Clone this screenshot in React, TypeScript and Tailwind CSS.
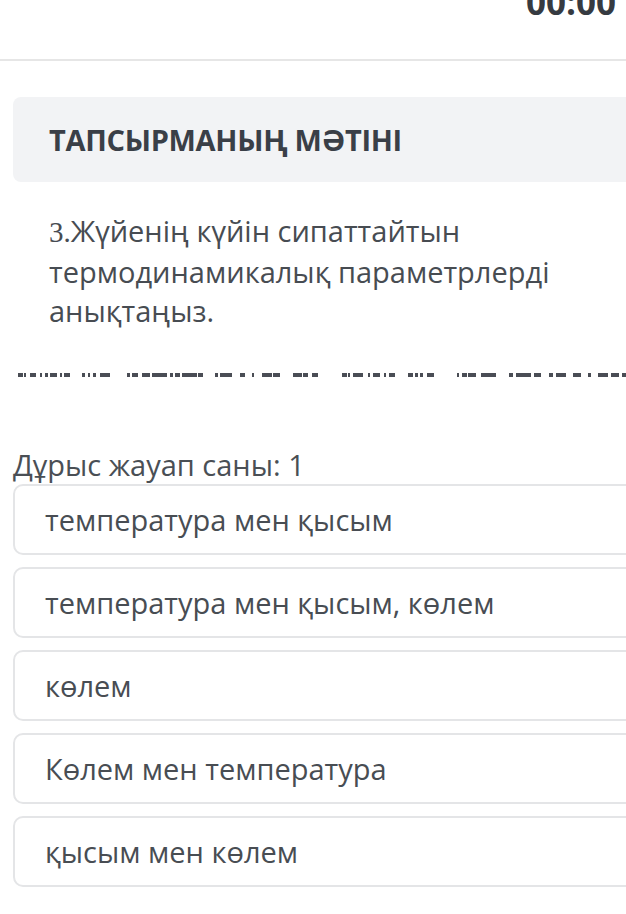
const font = { fontFamily: '"Open Sans", "Noto Sans", sans-serif' };

// cut-off line of text below the question, only the lower strokes show
const dashes: [number, number][] = [
  [18, 23], [24, 26], [30, 36], [40, 42], [45, 48], [50, 57], [60, 62], [64, 70],
  [82, 85], [88, 90], [93, 96], [100, 110],
  [127, 130], [132, 138], [142, 150], [152, 167], [170, 173], [175, 180], [182, 197], [198, 203],
  [215, 218], [220, 232], [240, 245], [252, 254], [262, 272], [273, 280],
  [293, 302], [303, 308], [312, 318],
  [342, 347], [348, 350], [353, 363], [368, 370], [373, 380], [384, 386], [389, 395],
  [408, 413], [415, 418], [420, 423], [427, 434],
  [457, 459], [462, 467], [468, 476], [481, 496], [509, 513], [516, 531], [534, 541],
  [549, 553], [556, 566], [573, 581], [588, 591], [598, 608], [611, 619], [622, 626],
];

const options = [
  "температура мен қысым",
  "температура мен қысым, көлем",
  "көлем",
  "Көлем мен температура",
  "қысым мен көлем",
];

export default function App() {
  return (
    <div className="w-[626px] h-[914px] overflow-hidden bg-white" style={font}>
      <div className="h-[61px] border-b-2 border-[#e6e6e6] flex justify-end pr-[10px] overflow-hidden">
        <span className="text-[35px] leading-none font-bold text-[#363a41] -mt-[16px]">00:00</span>
      </div>

      <div className="pl-[13px]">
        <div className="mt-[36px] h-[85px] -mr-[20px] rounded-lg bg-[#f2f3f5] flex items-center pl-[36px]">
          <h2 className="text-[29px] font-bold text-[#3a3f47] tracking-[-0.3px]">ТАПСЫРМАНЫҢ МӘТІНІ</h2>
        </div>

        <p className="mt-[29px] pl-[36px] pr-[40px] text-[29px] leading-[39px] text-[#474c52]">
          <span style={{ fontFamily: '"Liberation Serif", serif' }}>3.</span>Жүйенің күйін сипаттайтын термодинамикалық параметрлерді анықтаңыз.
        </p>

        <svg className="block mt-[43px] -ml-[13px]" width="626" height="4" viewBox="0 0 626 4">
          {dashes.map(([a, b], i) => (
            <rect key={i} x={a} y={0} width={b - a} height={4} fill="#4a4d55" />
          ))}
        </svg>

        <div className="mt-[70px] text-[29px] leading-[36px] text-[#4a4f55]">Дұрыс жауап саны: 1</div>

        <div className="mt-[1px] flex flex-col gap-[12px]">
          {options.map((o) => (
            <div
              key={o}
              className="h-[71px] -mr-[20px] rounded-[10px] border-2 border-[#e4e5e7] flex items-center pl-[30px] text-[29px] text-[#484d53]"
            >
              {o}
            </div>
          ))}
        </div>
      </div>
    </div>
  );
}
